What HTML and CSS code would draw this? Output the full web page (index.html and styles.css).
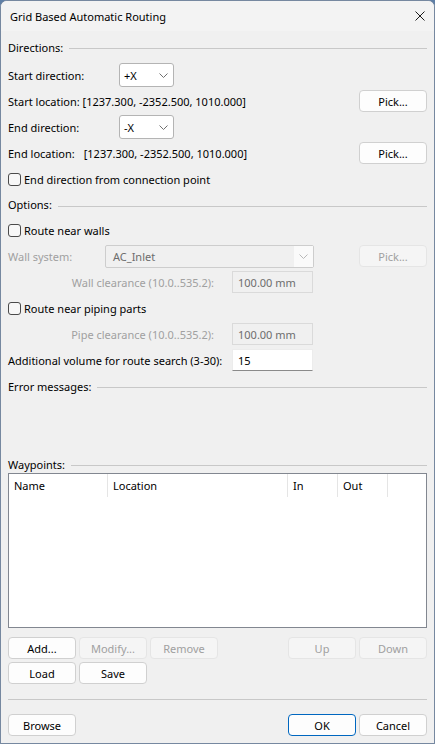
FILE: index.html
```html
<!DOCTYPE html>
<html lang="en">
<head>
    <meta charset="UTF-8">
    <meta name="viewport" content="width=device-width, initial-scale=1.0">
    <title>Grid Based Automatic Routing</title>
    <link rel="stylesheet" href="styles.css">
</head>
<body>

    <div class="window">
        <div class="titlebar">
            <span class="title">Grid Based Automatic Routing</span>
            <button class="close-btn" aria-label="Close">
                <svg width="10" height="10" viewBox="0 0 10 10"><path d="M0.5 0.5 L9.5 9.5 M9.5 0.5 L0.5 9.5" stroke="#1b1b1b" stroke-width="1" fill="none"/></svg>
            </button>
        </div>

        <div class="content">
            <div class="section-title first"><span>Directions:</span><i class="rule"></i></div>

            <div class="row">
                <span class="dir-label">Start direction:</span>
                <div class="combo dir-combo">
                    <span>+X</span>
                    <svg class="chevron" width="9" height="5" viewBox="0 0 9 5"><path d="M0.5 0.5 L4.5 4.5 L8.5 0.5" stroke="#707070" fill="none"/></svg>
                </div>
            </div>
            <div class="row">
                <span>Start location: [1237.300, -2352.500, 1010.000]</span>
                <button class="btn pick">Pick...</button>
            </div>
            <div class="row">
                <span class="dir-label">End direction:</span>
                <div class="combo dir-combo">
                    <span>-X</span>
                    <svg class="chevron" width="9" height="5" viewBox="0 0 9 5"><path d="M0.5 0.5 L4.5 4.5 L8.5 0.5" stroke="#707070" fill="none"/></svg>
                </div>
            </div>
            <div class="row">
                <span>End location:</span><span class="loc-value">[1237.300, -2352.500, 1010.000]</span>
                <button class="btn pick">Pick...</button>
            </div>
            <label class="row check"><i class="box"></i>End direction from connection point</label>

            <div class="section-title options"><span>Options:</span><i class="rule"></i></div>

            <label class="row check"><i class="box"></i>Route near walls</label>
            <div class="row">
                <span class="wall-label disabled">Wall system:</span>
                <div class="combo wall-combo">
                    <span>AC_Inlet</span>
                    <span class="drop"><svg width="9" height="5" viewBox="0 0 9 5"><path d="M0.5 0.5 L4.5 4.5 L8.5 0.5" stroke="#b8b8b8" fill="none"/></svg></span>
                </div>
                <button class="btn pick" disabled>Pick...</button>
            </div>
            <div class="row field-row">
                <span class="clear-label disabled">Wall clearance (10.0..535.2):</span>
                <div class="input off">100.00 mm</div>
            </div>
            <label class="row check"><i class="box"></i>Route near piping parts</label>
            <div class="row field-row">
                <span class="clear-label disabled">Pipe clearance (10.0..535.2):</span>
                <div class="input off">100.00 mm</div>
            </div>
            <div class="row field-row">
                <span>Additional volume for route search (3-30):</span>
                <div class="input">15</div>
            </div>

            <div class="section-title errors"><span>Error messages:</span><i class="rule"></i></div>
            <div class="error-area"></div>

            <div class="section-title waypoints"><span>Waypoints:</span><i class="rule"></i></div>
            <div class="listview">
                <div class="list-head">
                    <span class="col name">Name</span>
                    <span class="col location">Location</span>
                    <span class="col in">In</span>
                    <span class="col out">Out</span>
                </div>
            </div>

            <div class="list-actions">
                <button class="btn">Add...</button>
                <button class="btn" disabled>Modify...</button>
                <button class="btn" disabled>Remove</button>
                <span></span>
                <button class="btn" disabled>Up</button>
                <button class="btn" disabled>Down</button>
                <button class="btn">Load</button>
                <button class="btn">Save</button>
            </div>

            <hr class="separator">

            <div class="footer">
                <button class="btn">Browse</button>
                <span class="spacer"></span>
                <button class="btn default">OK</button>
                <button class="btn">Cancel</button>
            </div>
        </div>
    </div>

</body>
</html>
```

FILE: styles.css
```css
:root {
    --face: #f0f0f0;
    --text: #000;
    --muted: #a0a0a0;
    --rule: #c8c8c8;
    --btn-border: #d0d0d0;
}
* { box-sizing: border-box; }
html, body { margin: 0; height: 100%; }
body {
    background: #5f7fa6;
    font-family: "Noto Sans", "Open Sans", sans-serif;
    font-size: 11px;
    color: var(--text);
}
.window {
    width: 435px;
    height: 744px;
    background: var(--face);
    border: 1px solid #7688a0;
    border-radius: 7px 7px 0 0;
    overflow: hidden;
}
.titlebar {
    height: 30px;
    display: flex;
    align-items: center;
    justify-content: space-between;
    padding: 0 9px 0 9px;
    background: #f3f3f3;
}
.close-btn { border: none; background: none; padding: 0; width: 10px; height: 10px; margin-right: 0; display: flex; }
.content { padding: 5px 7px 0 7px; display: flex; flex-direction: column; }

.section-title { display: flex; align-items: center; height: 22px; }
.section-title .rule { flex: 1; height: 1px; background: var(--rule); margin: 3px 0 0 6px; }
.section-title.first { margin-bottom: 3px; }
.section-title.options { margin-top: 2px; height: 23px; }
.section-title.errors { margin-top: 2px; height: 24px; }
.section-title.waypoints { height: 18px; }
.error-area { height: 57px; }

.row { display: flex; align-items: center; height: 24px; margin-top: 2px; white-space: nowrap; }
.dir-label { width: 111px; }
.loc-value { margin-left: 9px; }
.disabled { color: var(--muted); }

.combo { display: flex; align-items: center; justify-content: space-between; background: #fff; border: 1px solid #b4b4b4; border-radius: 3px; }
.dir-combo { width: 55px; height: 24px; padding: 0 5px 0 4px; }
.wall-label { width: 97px; }
.wall-combo { width: 209px; height: 23px; padding-left: 7px; background: #f0f0f0; border-color: #cdcdcd; color: #6d6d6d; border-radius: 2px; }
.wall-combo .drop { width: 19px; height: 21px; background: #fafafa; display: flex; align-items: center; justify-content: center; }

.check { cursor: default; }
.check .box { width: 13px; height: 13px; border: 1px solid #4a4a4a; border-radius: 3px; background: #f7f7f7; margin: 0 3px 0 0; }

.field-row { display: grid; grid-template-columns: 224px 81px; }
.clear-label { text-align: right; padding-right: 18px; }
.input { height: 22px; padding: 2px 5px; line-height: 17px; background: #fff; border: 1px solid #ececec; border-bottom-color: #8a8a8a; }
.input.off { background: #f0f0f0; border-color: #dadada; color: #6d6d6d; }

.btn {
    font: inherit;
    color: var(--text);
    height: 22px;
    width: 68px;
    padding: 0;
    background: #fdfdfd;
    border: 1px solid var(--btn-border);
    border-radius: 4px;
}
.btn:disabled { background: #f5f5f5; border-color: #e5e5e5; color: #a0a0a0; }
.btn.default { border-color: #0067c0; }
.pick { margin-left: auto; }

.listview { height: 155px; background: #fff; border: 1px solid #828790; }
.list-head { display: flex; height: 23px; }
.col { display: flex; align-items: center; padding-left: 5px; border-right: 1px solid #e5e5e5; }
.col.name { width: 99px; }
.col.location { width: 180px; }
.col.in { width: 50px; }
.col.out { width: 50px; }

.list-actions { display: grid; grid-template-columns: 68px 68px 68px 1fr 68px 68px; gap: 3px; margin-top: 9px; }
.separator { border: none; height: 1px; background: var(--rule); margin: 15px 0 0; }
.footer { display: flex; gap: 3px; margin-top: 14px; }
.spacer { flex: 1; }
```
